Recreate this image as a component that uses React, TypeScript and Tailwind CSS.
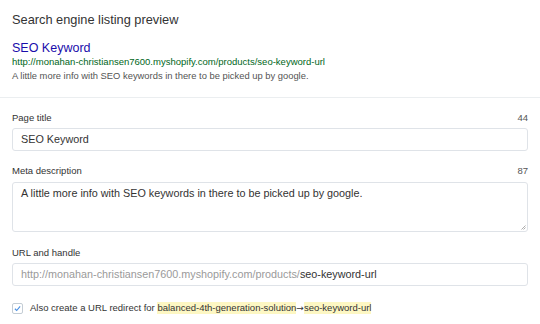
export default function App() {
  return (
    <div
      className="w-[540px] h-[324px] overflow-hidden bg-white text-[#333]"
      style={{ fontFamily: '"Liberation Sans", Arial, sans-serif' }}
    >
      {/* Preview */}
      <div className="px-3 pt-[12px] pb-[15px] border-b border-[#ebeef0]">
        <h2 className="text-[12.8px] leading-[16px] text-[#333]">Search engine listing preview</h2>
        <div className="mt-[12px] text-[12.5px] leading-[16px] text-[#1a0dab]">SEO Keyword</div>
        <div className="text-[9.5px] leading-[12px] text-[#006621]">
          http://monahan-christiansen7600.myshopify.com/products/seo-keyword-url
        </div>
        <div className="mt-[2px] text-[9.4px] leading-[12px] text-[#545454]">
          A little more info with SEO keywords in there to be picked up by google.
        </div>
      </div>

      {/* Form */}
      <div className="px-3 pt-[14px]">
        <div className="flex justify-between text-[9.5px] leading-[12px] text-[#333]">
          <span>Page title</span>
          <span className="text-[#555]">44</span>
        </div>
        <div className="mt-[4px] h-[23px] flex items-center px-2 border border-[#dfe3e8] rounded-[3px] text-[10.8px] text-[#333]">
          SEO Keyword
        </div>

        <div className="mt-[14px] flex justify-between text-[9.5px] leading-[12px] text-[#333]">
          <span>Meta description</span>
          <span className="text-[#555]">87</span>
        </div>
        <div className="relative mt-[5px] h-[50px] px-2 pt-[3px] border border-[#dfe3e8] rounded-[3px] text-[10.8px] leading-[14px] text-[#333]">
          A little more info with SEO keywords in there to be picked up by google.
          <svg className="absolute right-[1px] bottom-[1px]" width="6" height="6" viewBox="0 0 6 6">
            <path d="M5.5 1.5 L1.5 5.5 M5.5 3.5 L3.5 5.5" stroke="#999" strokeWidth="0.8" />
          </svg>
        </div>

        <div className="mt-[15px] text-[9.5px] leading-[12px] text-[#333]">URL and handle</div>
        <div className="mt-[4px] h-[23px] flex items-center px-2 border border-[#dfe3e8] rounded-[3px] text-[10.8px]">
          <span className="text-[#9a9a9a]">http://monahan-christiansen7600.myshopify.com/products/</span>
          <span className="text-[#333]">seo-keyword-url</span>
        </div>

        <div className="mt-[16px] flex items-center text-[9.5px] leading-[12px] text-[#333]">
          <span className="w-[11px] h-[11px] border border-[#c4cdd5] rounded-[2px] flex items-center justify-center bg-white">
            <svg width="7" height="7" viewBox="0 0 8 8">
              <path d="M1 4.3 L3.1 6.3 L7 1.5" fill="none" stroke="#4a90e2" strokeWidth="1.3" />
            </svg>
          </span>
          <span className="ml-[7px]">Also create a URL redirect for&nbsp;</span>
          <span className="bg-[#fdf7c3]">balanced-4th-generation-solution</span>
          <span style={{ fontFamily: '"DejaVu Sans", sans-serif' }} className="text-[9px]">→</span>
          <span className="bg-[#fdf7c3]">seo-keyword-url</span>
        </div>
      </div>
    </div>
  );
}
